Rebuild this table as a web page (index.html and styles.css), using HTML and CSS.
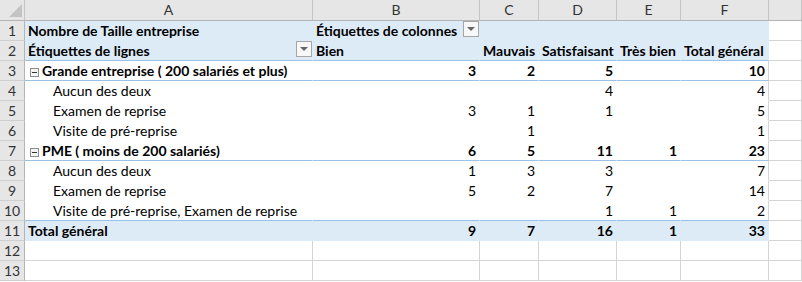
FILE: index.html
```html
<!DOCTYPE html>
<html lang="fr">
<head>
    <meta charset="UTF-8">
    <title>Tableau croisé - Taille entreprise</title>
    <link rel="stylesheet" href="styles.css">
</head>
<body>
    <div class="sheet">
        <!-- column letters -->
        <div class="row head-row">
            <div class="cell corner"><span class="select-all"></span></div>
            <div class="cell col-head">A</div>
            <div class="cell col-head">B</div>
            <div class="cell col-head">C</div>
            <div class="cell col-head">D</div>
            <div class="cell col-head">E</div>
            <div class="cell col-head">F</div>
            <div class="cell col-head"></div>
        </div>

        <div class="row">
            <div class="cell row-head">1</div>
            <div class="cell pv blue b">Nombre de Taille entreprise</div>
            <div class="cell pv blue b">Étiquettes de colonnes<span class="filter"></span></div>
            <div class="cell pv blue"></div>
            <div class="cell pv blue"></div>
            <div class="cell pv blue"></div>
            <div class="cell pv blue"></div>
            <div class="cell"></div>
        </div>

        <div class="row">
            <div class="cell row-head">2</div>
            <div class="cell pv blue b line">Étiquettes de lignes<span class="filter"></span></div>
            <div class="cell pv blue b line">Bien</div>
            <div class="cell pv blue b line">Mauvais</div>
            <div class="cell pv blue b line">Satisfaisant</div>
            <div class="cell pv blue b line">Très bien</div>
            <div class="cell pv blue b line">Total général</div>
            <div class="cell"></div>
        </div>

        <div class="row">
            <div class="cell row-head">3</div>
            <div class="cell pv b line"><span class="toggle"></span>Grande entreprise ( 200 salariés et plus)</div>
            <div class="cell pv num b line">3</div>
            <div class="cell pv num b line">2</div>
            <div class="cell pv num b line">5</div>
            <div class="cell pv num b line"></div>
            <div class="cell pv num b line edge">10</div>
            <div class="cell"></div>
        </div>

        <div class="row">
            <div class="cell row-head">4</div>
            <div class="cell pv child">Aucun des deux</div>
            <div class="cell pv num"></div>
            <div class="cell pv num"></div>
            <div class="cell pv num">4</div>
            <div class="cell pv num"></div>
            <div class="cell pv num edge">4</div>
            <div class="cell"></div>
        </div>

        <div class="row">
            <div class="cell row-head">5</div>
            <div class="cell pv child">Examen de reprise</div>
            <div class="cell pv num">3</div>
            <div class="cell pv num">1</div>
            <div class="cell pv num">1</div>
            <div class="cell pv num"></div>
            <div class="cell pv num edge">5</div>
            <div class="cell"></div>
        </div>

        <div class="row">
            <div class="cell row-head">6</div>
            <div class="cell pv child">Visite de pré-reprise</div>
            <div class="cell pv num"></div>
            <div class="cell pv num">1</div>
            <div class="cell pv num"></div>
            <div class="cell pv num"></div>
            <div class="cell pv num edge">1</div>
            <div class="cell"></div>
        </div>

        <div class="row">
            <div class="cell row-head">7</div>
            <div class="cell pv b line"><span class="toggle"></span>PME ( moins de 200 salariés)</div>
            <div class="cell pv num b line">6</div>
            <div class="cell pv num b line">5</div>
            <div class="cell pv num b line">11</div>
            <div class="cell pv num b line">1</div>
            <div class="cell pv num b line edge">23</div>
            <div class="cell"></div>
        </div>

        <div class="row">
            <div class="cell row-head">8</div>
            <div class="cell pv child">Aucun des deux</div>
            <div class="cell pv num">1</div>
            <div class="cell pv num">3</div>
            <div class="cell pv num">3</div>
            <div class="cell pv num"></div>
            <div class="cell pv num edge">7</div>
            <div class="cell"></div>
        </div>

        <div class="row">
            <div class="cell row-head">9</div>
            <div class="cell pv child">Examen de reprise</div>
            <div class="cell pv num">5</div>
            <div class="cell pv num">2</div>
            <div class="cell pv num">7</div>
            <div class="cell pv num"></div>
            <div class="cell pv num edge">14</div>
            <div class="cell"></div>
        </div>

        <div class="row">
            <div class="cell row-head">10</div>
            <div class="cell pv child line">Visite de pré-reprise, Examen de reprise</div>
            <div class="cell pv num line"></div>
            <div class="cell pv num line"></div>
            <div class="cell pv num line">1</div>
            <div class="cell pv num line">1</div>
            <div class="cell pv num line edge">2</div>
            <div class="cell"></div>
        </div>

        <div class="row">
            <div class="cell row-head">11</div>
            <div class="cell pv blue b">Total général</div>
            <div class="cell pv blue num b">9</div>
            <div class="cell pv blue num b">7</div>
            <div class="cell pv blue num b">16</div>
            <div class="cell pv blue num b">1</div>
            <div class="cell pv blue num b">33</div>
            <div class="cell"></div>
        </div>

        <div class="row">
            <div class="cell row-head">12</div>
            <div class="cell"></div>
            <div class="cell"></div>
            <div class="cell"></div>
            <div class="cell"></div>
            <div class="cell"></div>
            <div class="cell"></div>
            <div class="cell"></div>
        </div>

        <div class="row">
            <div class="cell row-head">13</div>
            <div class="cell"></div>
            <div class="cell"></div>
            <div class="cell"></div>
            <div class="cell"></div>
            <div class="cell"></div>
            <div class="cell"></div>
            <div class="cell"></div>
        </div>
    </div>
</body>
</html>
```
FILE: styles.css
```css
body {
    margin: 0;
    background: #fff;
    color: #000;
    font-family: Lato, "Liberation Sans", sans-serif;
    font-size: 14px;
}
.sheet {
    width: 802px;
    height: 282px;
    overflow: hidden;
}
.row {
    display: grid;
    grid-template-columns: 25px 288px 167px 59px 78px 64px 88px 33px;
    height: 20px;
}
.cell {
    box-sizing: border-box;
    position: relative;
    height: 20px;
    padding: 0 3px;
    line-height: 19px;
    white-space: nowrap;
    border-right: 1px solid #d4d4d4;
    border-bottom: 1px solid #d4d4d4;
}

/* headers */
.head-row {
    height: 21px;
}
.head-row .cell {
    height: 21px;
    line-height: 20px;
    background: #e6e6e6;
    border-right-color: #c4c4c4;
    border-bottom-color: #b4b4b4;
}
.col-head {
    text-align: center;
    color: #333;
}
.row-head {
    background: #e6e6e6;
    border-right-color: #b4b4b4;
    border-bottom-color: #cfcfcf;
    text-align: center;
    color: #333;
    padding: 0;
}
.select-all {
    position: absolute;
    right: 2px;
    bottom: 3px;
    width: 0;
    height: 0;
    border-left: 13px solid transparent;
    border-bottom: 13px solid #c3c3c3;
}

/* pivot table area */
.pv {
    border-color: transparent;
    background: #fff;
}
.pv.blue {
    background: #ddebf7;
}
.pv.line {
    border-bottom-color: #9bc2e6;
}
.pv.edge {
    border-right-color: #d4d4d4;
}
.b {
    font-weight: bold;
}
.num {
    text-align: right;
}
.child {
    padding-left: 28px;
}
.toggle {
    display: inline-block;
    position: relative;
    box-sizing: border-box;
    width: 9px;
    height: 9px;
    margin: 0 3px 0 2px;
    border: 1px solid #8c8c8c;
    background: #f4f4f4;
    vertical-align: -1px;
}
.toggle::after {
    content: "";
    position: absolute;
    left: 1px;
    right: 1px;
    top: 3px;
    height: 1px;
    background: #333;
}
.filter {
    position: absolute;
    right: 0;
    top: 0;
    box-sizing: border-box;
    width: 16px;
    height: 16px;
    border: 1px solid #a6a6a6;
    background: #f8f8f8;
}
.filter::after {
    content: "";
    position: absolute;
    left: 3px;
    top: 5px;
    border-left: 4px solid transparent;
    border-right: 4px solid transparent;
    border-top: 4px solid #666;
}
```
